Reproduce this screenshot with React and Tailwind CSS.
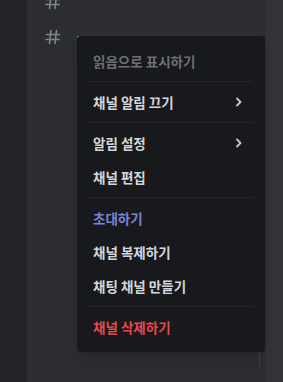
import React from "react";

const Hash = () => (
  <svg width="16" height="16" viewBox="0 0 16 16" fill="none" stroke="#80848e" strokeWidth="1.6" strokeLinecap="round">
    <path d="M6 1.5 L4.5 14.5" />
    <path d="M11.5 1.5 L10 14.5" />
    <path d="M1.5 5.5 H14.5" />
    <path d="M1 10.5 H14" />
  </svg>
);

const Chevron = () => (
  <svg width="8" height="10" viewBox="0 0 8 10" fill="none" stroke="#c4c7cc" strokeWidth="1.8" strokeLinecap="round" strokeLinejoin="round">
    <path d="M2 1.5 L5.5 5 L2 8.5" />
  </svg>
);

const Item = ({ label, color = "text-[#d4d6da]", arrow }) => (
  <div className="flex h-[34px] items-center justify-between px-4">
    <span className={`text-[13.5px] font-bold ${color}`}>{label}</span>
    {arrow && (
      <span className="pr-[6px]">
        <Chevron />
      </span>
    )}
  </div>
);

const Sep = () => <div className="mx-3 my-[3px] h-px bg-[#26272b]" />;

export default function App() {
  return (
    <div
      className="flex h-[382px] w-[283px] overflow-hidden bg-[#2b2d31]"
      style={{ fontFamily: '"Noto Sans CJK KR", "Noto Sans", sans-serif' }}
    >
      <div className="w-[27px] shrink-0 bg-[#232428]" />
      <div className="relative flex-1 bg-[#2b2d31]">
        <div className="flex flex-col gap-[19px] pl-[18px] pt-0 -mt-[6px]">
          <Hash />
          <Hash />
        </div>
        <div className="absolute left-[50px] top-[36px] h-[2px] w-[2px] bg-[#23a55a]" />
        <div className="absolute right-[6px] top-[352px] h-[18px] w-px bg-[#3a3c42]" />
        <div className="absolute left-[50px] top-[36px] w-[188px] rounded-[4px] bg-[#18191c] py-2 shadow-lg">
          <Item label="읽음으로 표시하기" color="text-[#6d6f78]" />
          <Sep />
          <Item label="채널 알림 끄기" arrow />
          <Sep />
          <Item label="알림 설정" arrow />
          <Item label="채널 편집" />
          <Sep />
          <Item label="초대하기" color="text-[#7984d4]" />
          <Item label="채널 복제하기" />
          <Item label="채팅 채널 만들기" />
          <Sep />
          <Item label="채널 삭제하기" color="text-[#e5484d]" />
        </div>
      </div>
      <div className="w-[17px] shrink-0 bg-[#313338]" />
    </div>
  );
}
